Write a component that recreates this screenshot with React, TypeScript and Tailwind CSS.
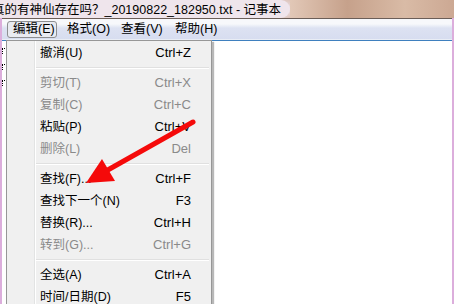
import React from 'react';

type Item = { label: string; key?: string; disabled?: boolean } | 'sep';

const items: Item[] = [
  { label: '撤消(U)', key: 'Ctrl+Z' },
  'sep',
  { label: '剪切(T)', key: 'Ctrl+X', disabled: true },
  { label: '复制(C)', key: 'Ctrl+C', disabled: true },
  { label: '粘贴(P)', key: 'Ctrl+V' },
  { label: '删除(L)', key: 'Del', disabled: true },
  'sep',
  { label: '查找(F)...', key: 'Ctrl+F' },
  { label: '查找下一个(N)', key: 'F3' },
  { label: '替换(R)...', key: 'Ctrl+H' },
  { label: '转到(G)...', key: 'Ctrl+G', disabled: true },
  'sep',
  { label: '全选(A)', key: 'Ctrl+A' },
  { label: '时间/日期(D)', key: 'F5' },
];

const menus = ['编辑(E)', '格式(O)', '查看(V)', '帮助(H)'];

const font = "font-['Liberation_Sans','Noto_Sans_CJK_SC',sans-serif]";

export default function App() {
  return (
    <div className={`relative w-[454px] h-[304px] overflow-hidden bg-[#dcaedc] ${font}`}>
      {/* title bar: glass with a light glow behind the caption */}
      <div className="h-[18px] flex overflow-hidden bg-[#cfac97]">
        <div className="w-[290px] shrink-0 bg-[#efe5ec] rounded-r-[10px] shadow-[8px_0_12px_#efe5ec]">
          <div className="ml-[-8px] text-[12.5px] leading-[18px] text-black whitespace-nowrap">
            <span className="font-['Noto_Sans_CJK_SC',sans-serif]">真的有神仙存在吗？</span>
            _20190822_182950.txt - 记事本
          </div>
        </div>
        <div className="flex-1 [background:linear-gradient(90deg,#e2c8b7,#c6a18b_35%,#d9bba6_70%,#cca893)]" />
      </div>

      <div className="flex flex-col h-[286px] mx-[2px] bg-white overflow-hidden">
        <div className="h-px shrink-0 bg-[#6b5e58]" />

        {/* menu bar */}
        <div className="h-[20px] shrink-0 flex items-center gap-[4px] pl-[5px] bg-[#dce1f1] [background:linear-gradient(180deg,#f7f8fb_25%,#dde2f2_45%,#d7ddf0)] text-[12.5px] text-black">
          {menus.map((m, i) => (
            <div
              key={m}
              className={`w-[50px] h-[17px] flex items-center whitespace-nowrap rounded-[3px] ${
                i === 0 ? 'border border-[#8d8e90] bg-[#e9ebf1] pl-[5px]' : 'pl-[6px]'
              }`}
            >
              {m}
            </div>
          ))}
        </div>
        <div className="h-px shrink-0 bg-[#e9edf5]" />
        <div className="h-px shrink-0 bg-[#3f80bf]" />

        {/* text area */}
        <div className="flex-1 flex flex-col gap-[10px] pt-[7px]">
          {[0, 1, 2].map((i) => (
            <div key={i} className="w-[3px] h-[6px] border-l border-t border-dotted border-black" />
          ))}
        </div>
      </div>

      {/* edit menu */}
      <div className="absolute left-[6px] top-[40px] w-[206px] h-[270px] flex bg-[#f0f0f0] border border-[#979797] shadow-[2px_2px_1px_rgba(0,0,0,0.28)] text-[12.5px]">
        <div className="w-[28px] shrink-0 border-r border-[#e2e3e3]" />
        <div className="w-px shrink-0 bg-white" />
        <div className="flex-1 flex flex-col pt-[1px]">
          {items.map((it, i) =>
            it === 'sep' ? (
              <div key={i} className="h-[8px] flex flex-col justify-center pr-[2px]">
                <div className="h-px bg-[#e0e0e0]" />
                <div className="h-px bg-white" />
              </div>
            ) : (
              <div
                key={i}
                className={`h-[22px] flex items-center justify-between pl-[4px] pr-[20px] whitespace-nowrap ${
                  it.disabled ? 'text-[#8a8a8a]' : 'text-black'
                }`}
              >
                <span>{it.label}</span>
                <span className="text-[13px]">{it.key}</span>
              </div>
            )
          )}
        </div>
      </div>

      {/* red arrow */}
      <svg className="absolute inset-0 pointer-events-none" width="454" height="304" viewBox="0 0 454 304">
        <line x1="193" y1="122" x2="106" y2="171" stroke="#f50a0a" strokeWidth="5" strokeLinecap="round" />
        <polygon points="86,183 102,159 115,181" fill="#f50a0a" />
      </svg>
    </div>
  );
}
